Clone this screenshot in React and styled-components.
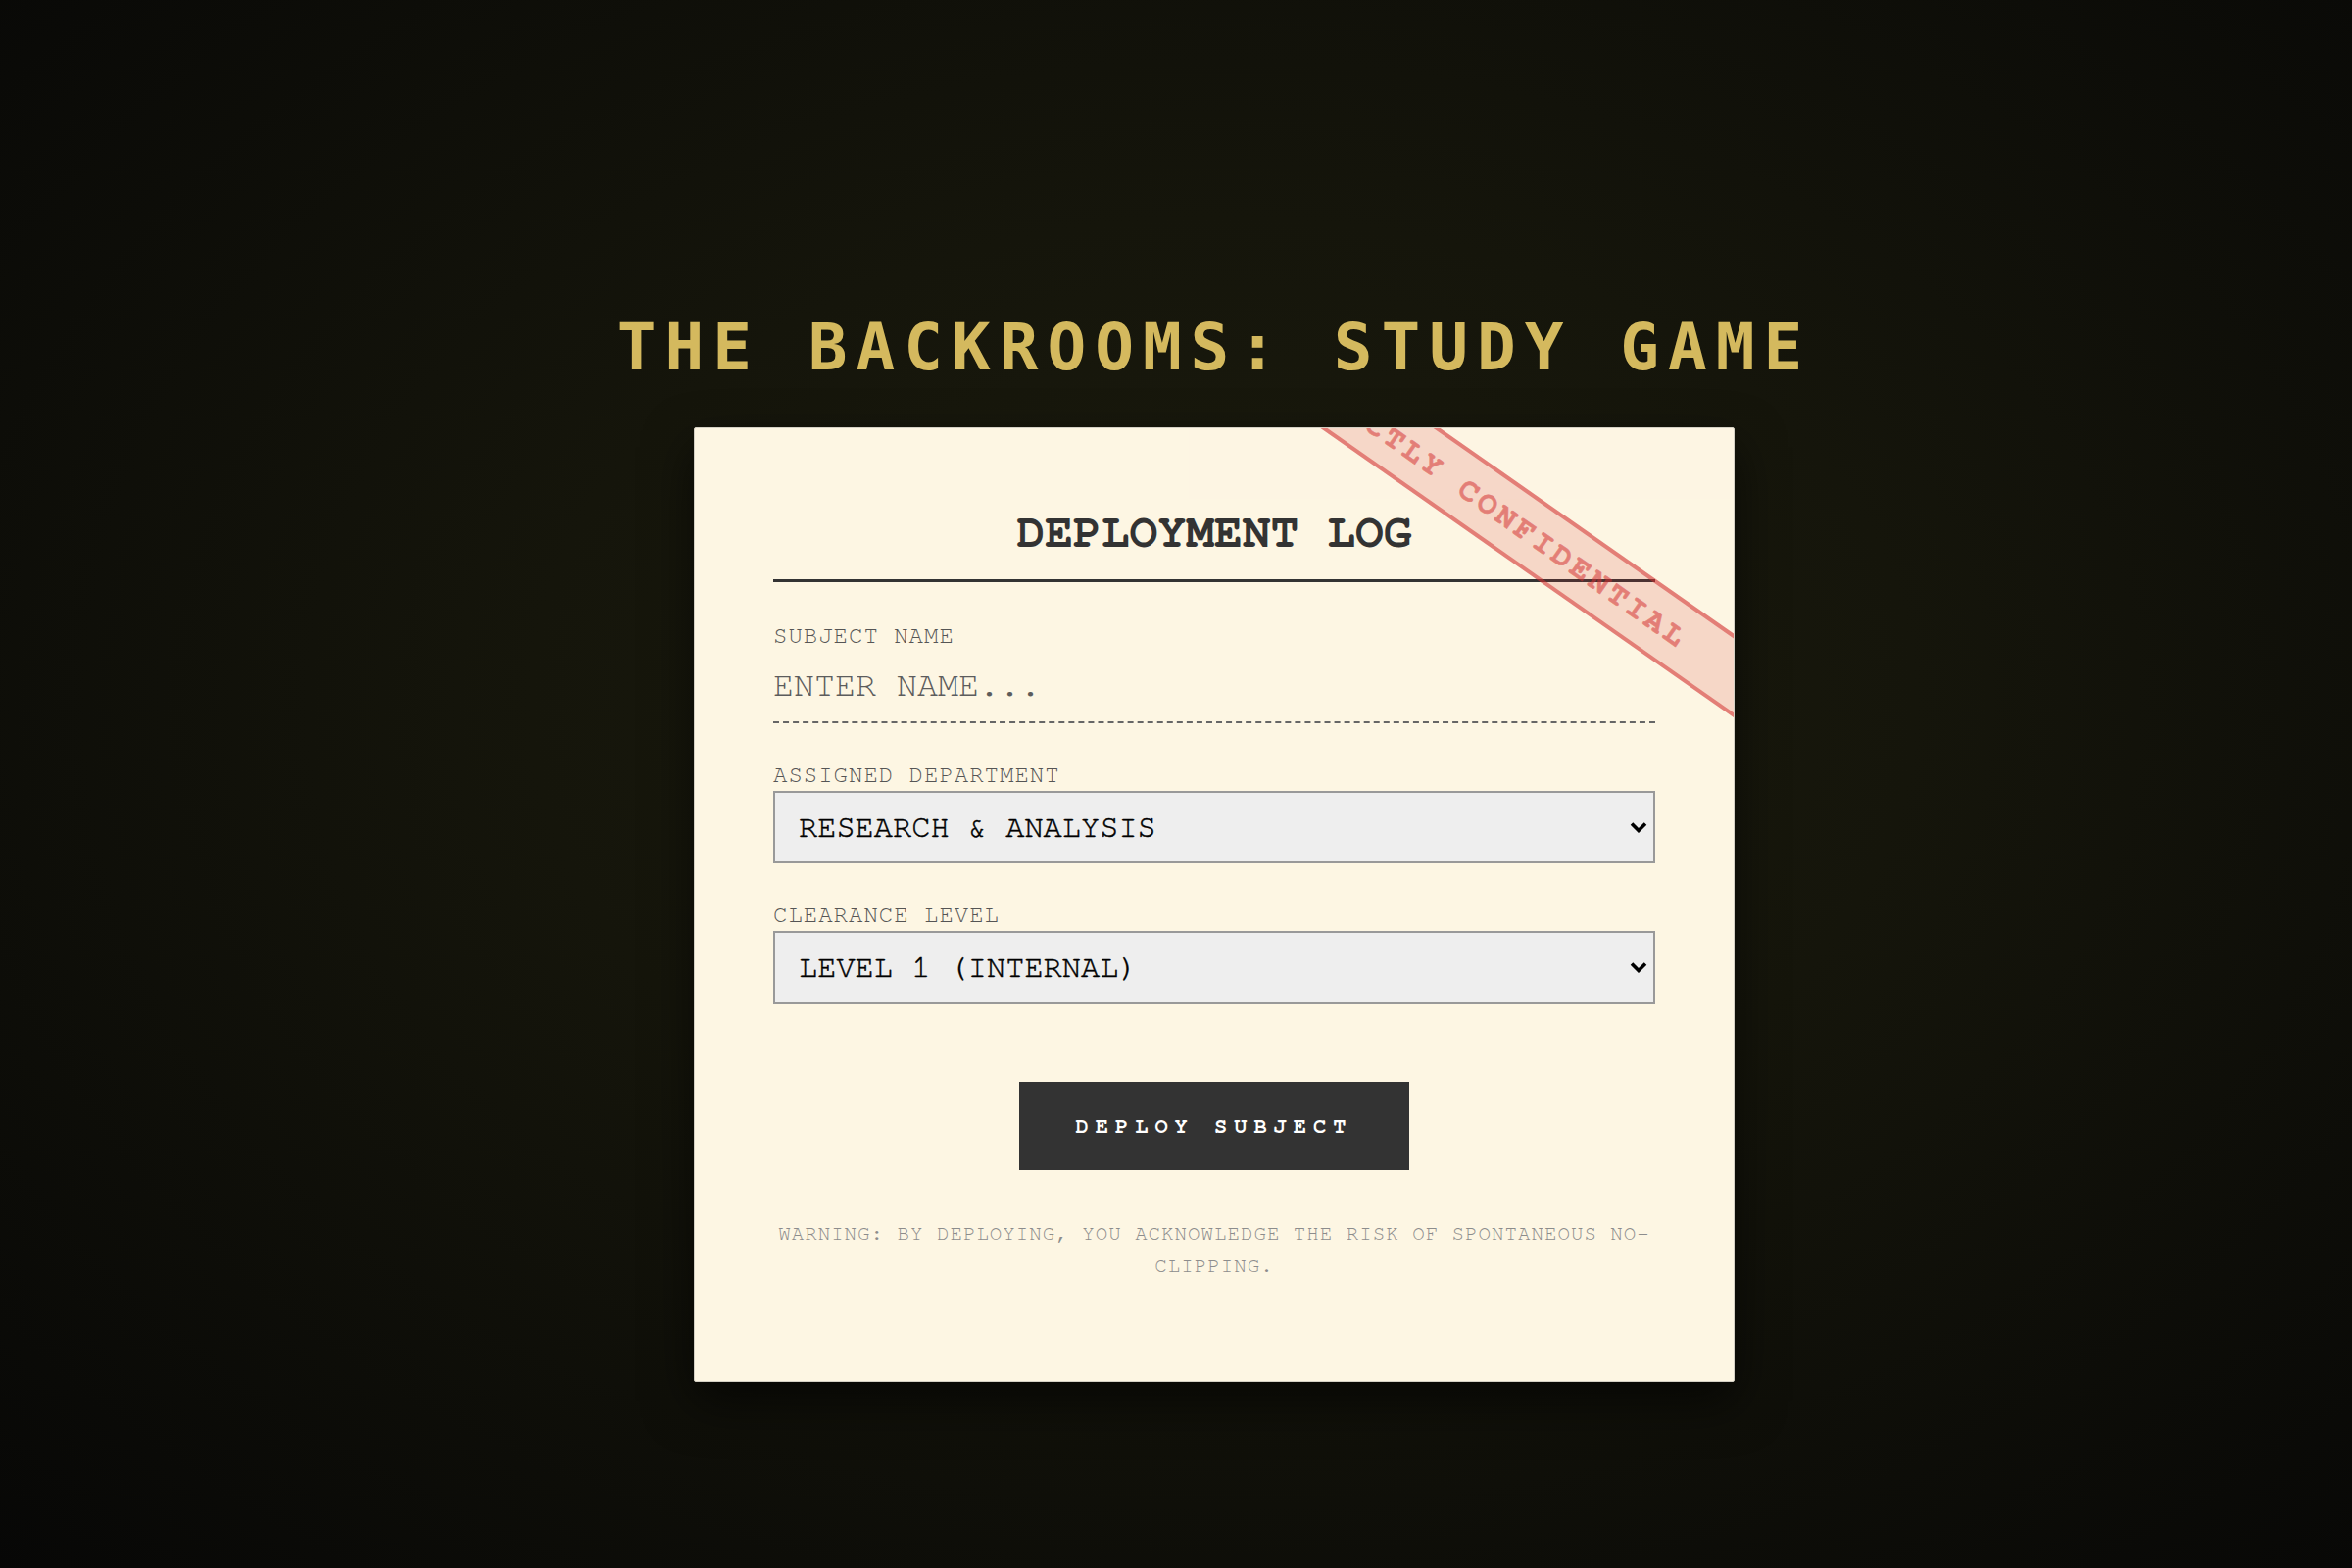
import { createGlobalStyle, styled } from 'styled-components'

const GlobalStyle = createGlobalStyle`
    html, body {
        margin: 0;
        padding: 0;
    }
    body {
        background: #080806;
    }
    * {
        box-sizing: border-box;
    }
`

const Page = styled.div`
    min-height: 100vh;
    display: flex;
    flex-direction: column;
    align-items: center;
    padding: 318px 0 0 78px;
    background: radial-gradient(ellipse at 52% 45%, #1c1c0e 0%, #15150b 40%, #070706 100%);
    font-family: "Nimbus Mono PS", "Nimbus Mono L", "FreeMono", "Liberation Mono", monospace;
`

const GameTitle = styled.h1`
    margin: 0 0 44px;
    font-family: "DejaVu Sans Mono", sans-serif;
    font-size: 66px;
    font-weight: 700;
    letter-spacing: 9px;
    line-height: 74px;
    color: #d4b95e;
`

const Card = styled.div`
    position: relative;
    overflow: hidden;
    width: 1062px;
    padding: 80px 80px 101px;
    background: #fdf6e3;
    border: 1px solid #d4d0c4;
    border-radius: 2px;
    box-shadow: 0 20px 50px rgba(0, 0, 0, 0.6);
`

const Stamp = styled.div`
    position: absolute;
    left: 461px;
    top: 43px;
    width: 700px;
    height: 70px;
    transform: rotate(35deg);
    border-top: 4px solid #d32f2f;
    border-bottom: 4px solid #d32f2f;
    background: rgba(211, 47, 47, 0.25);
    color: #d32f2f;
    opacity: 0.6;
    font-size: 32px;
    font-weight: 700;
    letter-spacing: 4px;
    line-height: 62px;
    text-align: center;
    white-space: nowrap;
    -webkit-text-stroke: 0.6px #d32f2f;
    pointer-events: none;
    z-index: 2;
`

const LogTitle = styled.h2`
    margin: 0 0 42px;
    padding-bottom: 20px;
    border-bottom: 3px solid #333;
    font-size: 48px;
    font-weight: 700;
    line-height: 54px;
    text-align: center;
    color: #333;
`

const Field = styled.div`
    margin-bottom: ${p => (p.$last ? '0' : '40px')};
`

const Label = styled.label`
    display: block;
    margin-bottom: 2px;
    font-size: 24px;
    letter-spacing: 1px;
    line-height: 27px;
    color: #555;
`

const NameInput = styled.input`
    display: block;
    width: 100%;
    height: 73px;
    padding: 14px 0 17px;
    border: none;
    border-bottom: 2px dashed #666;
    background: transparent;
    font-family: inherit;
    font-size: 35px;
    color: #333;
    outline: none;

    &::placeholder {
        color: #5c5c5c;
    }
`

const SelectWrap = styled.div`
    position: relative;
`

const Select = styled.select`
    display: block;
    width: 100%;
    height: 74px;
    padding: 0 40px 0 24px;
    border: 2px solid #999;
    border-radius: 0;
    appearance: none;
    background-color: #eee;
    font-family: inherit;
    font-size: 32px;
    color: #000;
    -webkit-text-stroke: 0.4px #000;
    outline: none;
`

const Chevron = styled.svg`
    position: absolute;
    right: 8px;
    top: 50%;
    width: 18px;
    height: 12px;
    transform: translateY(-50%);
    pointer-events: none;
`

const Actions = styled.div`
    display: flex;
    justify-content: center;
    margin-top: 80px;
`

const DeployButton = styled.button`
    height: 90px;
    padding: 0 58px;
    border: none;
    background: #333;
    color: #fff;
    font-family: inherit;
    font-size: 22px;
    font-weight: 700;
    letter-spacing: 7px;
    cursor: pointer;
`

const Warning = styled.p`
    margin: 48px 0 0;
    font-size: 20.8px;
    letter-spacing: 1px;
    line-height: 33px;
    text-align: center;
    color: #8c8c8c;
`

function ArrowIcon() {
    return (
        <Chevron viewBox="0 0 18 12" aria-hidden="true">
            <path d="M2 2.5 L9 9.5 L16 2.5" fill="none" stroke="#000" strokeWidth="3.6" />
        </Chevron>
    )
}

export default function App() {
    return (
        <>
            <GlobalStyle />
            <Page>
                <GameTitle>THE BACKROOMS: STUDY GAME</GameTitle>
                <Card>
                    <Stamp>STRICTLY CONFIDENTIAL</Stamp>
                    <LogTitle>DEPLOYMENT LOG</LogTitle>

                    <Field>
                        <Label htmlFor="subject">SUBJECT NAME</Label>
                        <NameInput id="subject" placeholder="ENTER NAME..." />
                    </Field>

                    <Field>
                        <Label htmlFor="department">ASSIGNED DEPARTMENT</Label>
                        <SelectWrap>
                            <Select id="department" defaultValue="research">
                                <option value="research">RESEARCH &amp; ANALYSIS</option>
                                <option value="maintenance">MAINTENANCE</option>
                                <option value="security">SECURITY</option>
                            </Select>
                            <ArrowIcon />
                        </SelectWrap>
                    </Field>

                    <Field $last>
                        <Label htmlFor="clearance">CLEARANCE LEVEL</Label>
                        <SelectWrap>
                            <Select id="clearance" defaultValue="1">
                                <option value="1">LEVEL 1 (INTERNAL)</option>
                                <option value="2">LEVEL 2 (RESTRICTED)</option>
                                <option value="3">LEVEL 3 (CLASSIFIED)</option>
                            </Select>
                            <ArrowIcon />
                        </SelectWrap>
                    </Field>

                    <Actions>
                        <DeployButton>DEPLOY SUBJECT</DeployButton>
                    </Actions>

                    <Warning>WARNING: BY DEPLOYING, YOU ACKNOWLEDGE THE RISK OF SPONTANEOUS NO-CLIPPING.</Warning>
                </Card>
            </Page>
        </>
    )
}
